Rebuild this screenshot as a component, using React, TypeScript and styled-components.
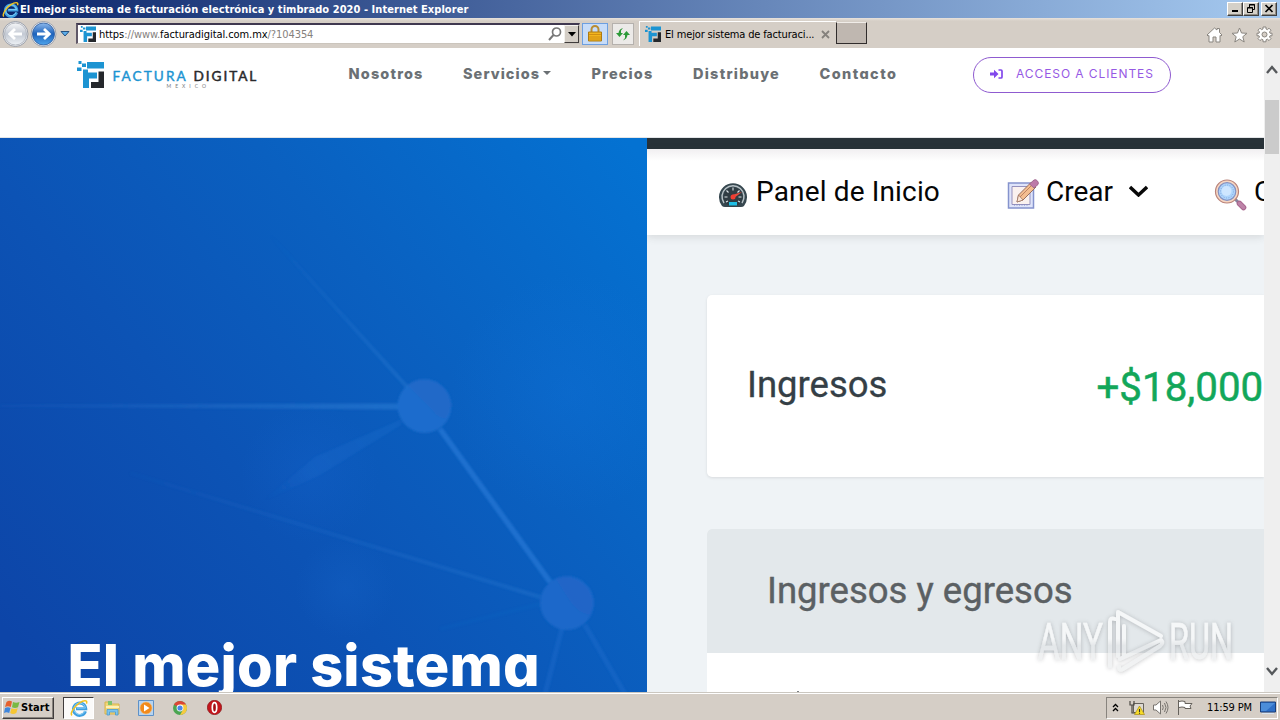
import React from 'react';
import styled, { createGlobalStyle, css } from 'styled-components';

const Global = createGlobalStyle`
  * { box-sizing: border-box; }
  body { margin: 0; overflow: hidden; }
  svg { display: block; flex: none; }
`;

const ui = css`font-family: 'DejaVu Sans Condensed', 'DejaVu Sans', Tahoma, sans-serif; font-size: 11px;`;

const Screen = styled.div`
  width: 1280px; height: 720px; display: flex; flex-direction: column; overflow: hidden; background: #fff;
`;

/* Window chrome */
const TitleBar = styled.header`
  ${ui} height: 18px; flex: none; display: flex; align-items: center; padding: 0 3px 0 2px;
  background: linear-gradient(90deg, #0a246a, #a6caf0);
  color: #fff; font-weight: bold;
`;
const TitleText = styled.span`
  flex: 1; margin-left: 1px; line-height: 17px; letter-spacing: 0.05px; white-space: nowrap;
`;
const WinButton = styled.span<{ $gap?: boolean }>`
  width: 16px; height: 14px; margin-left: ${p => (p.$gap ? 2 : 0)}px; margin-top: -1px;
  display: flex; align-items: center; justify-content: center; background: #d4d0c8;
  border: 1px solid; border-color: #fff #404040 #404040 #fff; box-shadow: inset -1px -1px #908c84;
`;
const Toolbar = styled.div`
  height: 30px; flex: none; display: flex; align-items: center; padding: 1px 7px 0 2px;
  background: linear-gradient(#e8e2dc 0, #d5cec6 3px, #d5cec6);
`;
const Address = styled.div`
  ${ui} width: 504px; height: 21px; margin-left: 6px; display: flex; align-items: center; padding-left: 2px;
  background: #fff; border: 1px solid #cbc5bd; border-top: 2px solid #403850; border-left: 2px solid #605868;
  color: #000;
`;
const Url = styled.span`flex: 1; margin-left: 3px; color: #85817d; letter-spacing: -0.07px; white-space: nowrap;`;
const UrlStrong = styled.span`color: #000;`;
const DropButton = styled.span`
  width: 15px; height: 18px; margin-left: 2px; display: flex; align-items: center; justify-content: center;
  background: #d4cec6; border: 1px solid; border-color: #f4f2ee #403c3c #403c3c #f4f2ee;
`;
const ToolButton = styled.span<{ $active?: boolean }>`
  width: ${p => (p.$active ? 26 : 22)}px; height: 22px; margin-left: ${p => (p.$active ? 2 : 4)}px;
  display: flex; align-items: center; justify-content: center;
  background: ${p => (p.$active ? '#c7dcf8' : '#eceae8')};
  border: 1px solid ${p => (p.$active ? '#6d9fe0' : '#b5b1ad')};
`;
const Tab = styled.div`
  ${ui} width: 197px; height: 25px; margin: 0 0 0 5px; display: flex; align-items: center; padding: 0 6px 0 5px;
  border-top: 1px solid #fff; border-left: 1px solid #fff; background: #d5cec6; color: #000;
`;
const TabText = styled.span`flex: 1; margin-left: 4px; letter-spacing: -0.15px; white-space: nowrap;`;
const NewTab = styled.span`
  width: 31px; height: 22px; margin-top: -1px; background: #bfb7b0;
  border: 1px solid #302c2c; border-top-color: #f0ece8;
`;
const Tools = styled.div`flex: 1; display: flex; justify-content: flex-end; align-items: center; gap: 8px; padding-top: 2px;`;

/* Web page */
const Viewport = styled.div`height: 644px; flex: none; display: flex;`;
const Page = styled.main`width: 1264px; height: 644px; display: flex; flex-direction: column; overflow: hidden;`;
const SiteHeader = styled.div`
  height: 90px; flex: none; display: flex; align-items: flex-start; padding: 9px 93px 0 77px;
  background: #fff; border-bottom: 1px solid #e3e5e7;
`;
const Brand = styled.div`width: 271.5px; display: flex; align-items: flex-start; padding-top: 4px;`;
const BrandText = styled.div`
  margin: 7px 0 0 8.5px; width: 147px; display: flex; flex-direction: column;
  font: 13.6px/16px Lato, sans-serif; color: #2a2a2c; white-space: nowrap;
`;
const BrandName = styled.div`display: flex; gap: 5px;`;
const BrandFirst = styled.span`width: 76px; color: #1c94d2; letter-spacing: 2.1px; -webkit-text-stroke: 0.4px #1c94d2;`;
const BrandSecond = styled.span`letter-spacing: 1.95px; -webkit-text-stroke: 0.5px #2a2a2c;`;
const BrandCountry = styled.span`margin: -1px 0 0 54px; font-size: 5px; line-height: 7px; letter-spacing: 4px; color: #77797c;`;
const Nav = styled.nav`
  width: 624.5px; display: grid; grid-template-columns: 114.5px 128.5px 101.5px 126.5px auto;
  font: 800 14.5px/34px Inter, sans-serif; font-feature-settings: 'cv11'; color: #6b7074;
`;
const NavItem = styled.span<{ $ls: number }>`
  display: flex; align-items: center; letter-spacing: ${p => p.$ls}px; white-space: nowrap;
`;
const Caret = styled.i`border: 4.5px solid transparent; border-top-color: #6b7074; border-bottom: 0; margin: -2px 0 0 3px;`;
const LoginButton = styled.div`
  width: 198px; height: 36px; display: flex; align-items: center; padding: 0 0 3px 16px;
  border: 1px solid #8f5bd0; border-radius: 18px; color: #9659e4;
  font: 12px/30px Inter, sans-serif; letter-spacing: 0.92px; white-space: nowrap;
`;
const LoginLabel = styled.span`margin-left: 13px;`;

const Body = styled.div`flex: 1; display: flex; min-height: 0;`;
const Hero = styled.section`
  width: 647px; display: grid; overflow: hidden;
  background:
    radial-gradient(circle at 570px 255px, rgba(18,115,220,.28), transparent 120px),
    radial-gradient(circle at 345px 450px, rgba(25,105,205,.25), transparent 50px),
    radial-gradient(circle at 310px 335px, rgba(25,105,215,.2), transparent 70px),
    linear-gradient(51deg, #0d45a8 5%, #0c53b5 38%, #0a60c0 64%, #0472d2 98%);
  & > * { grid-area: 1 / 1; }
`;
const HeroTitle = styled.h1`
  margin: 0; align-self: end; padding-left: 67.5px; height: 62px; color: #fff; white-space: nowrap;
  font: 800 57.5px/70px Inter, sans-serif; font-feature-settings: 'cv11'; letter-spacing: 0.25px;
`;
const Panel = styled.section`flex: 1; min-width: 0; display: flex; flex-direction: column; background: #eff3f6; overflow: hidden;`;
const PanelTop = styled.div`height: 11px; flex: none; background: #283238;`;
const PanelMenu = styled.div`
  height: 86px; flex: none; display: flex; align-items: center; padding-left: 71px;
  background: linear-gradient(#f1eff1, #fff 12px); box-shadow: 0 2px 8px rgba(60,60,60,.14);
  font: 28px/84px Roboto, sans-serif; color: #050505; white-space: nowrap;
`;
const MenuEntry = styled.div<{ $w?: number; $gap: number; $ls?: number }>`
  width: ${p => (p.$w ? p.$w + 'px' : 'auto')}; flex: none; display: flex; align-items: center;
  gap: ${p => p.$gap}px; letter-spacing: ${p => p.$ls || 0}px;
`;
const MenuIcon = styled.span`padding-top: 4px;`;
const MenuLabel = styled.span`margin-right: 9px;`;
const MenuArrow = styled.span`padding-bottom: 3px;`;
const IncomeCard = styled.div`
  height: 182px; flex: none; margin: 60px 0 0 60px; display: flex; padding: 0 0 0 40px;
  background: #fff; border-radius: 5px 0 0 5px; box-shadow: 0 1px 3px rgba(0,0,0,.1);
  font: 36.5px/180px Roboto, sans-serif; color: #353f46; white-space: nowrap; -webkit-text-stroke: 0.3px;
`;
const IncomeLabel = styled.span`width: 349.5px;`;
const Amount = styled.span`color: #12a75a; font-size: 40.3px; line-height: 186px; -webkit-text-stroke: 0.5px #12a75a;`;
const ChartCard = styled.div`
  margin: 52px 0 0 60px; flex: 1; display: flex; flex-direction: column; justify-content: space-between;
  background: #fff; border-radius: 5px 0 0 0; overflow: hidden;
`;
const ChartTitle = styled.div`
  height: 124px; padding-left: 60px; background: #e3e8eb; color: #5b6063;
  font: 36.5px/123px Roboto, sans-serif; white-space: nowrap; -webkit-text-stroke: 0.4px #5b6063;
`;
const ChartTick = styled.i`width: 2px; height: 1px; margin-left: 90px; background: #7c8083;`;
const ScrollBar = styled.aside`
  width: 16px; height: 644px; display: flex; flex-direction: column; align-items: center; background: #efefef;
`;
const Thumb = styled.div`width: 14px; height: 54px; margin: 22px 0 auto; background: #cbcbcb;`;
const ArrowBox = styled.div<{ $top: number; $bottom: number }>`margin: ${p => p.$top}px 0 ${p => p.$bottom}px;`;

/* Taskbar */
const TaskBar = styled.footer`
  ${ui} height: 28px; flex: none; display: flex; align-items: center; padding: 2px 2px 0;
  background: #d5cec6; border-top: 1px solid #cbc7c0; box-shadow: inset 0 1px #fff; color: #000;
`;
const StartButton = styled.div`
  width: 52px; height: 22px; display: flex; align-items: center; padding-left: 1px; font-weight: bold;
  border: 1px solid; border-color: #fff #403c3c #403c3c #fff; box-shadow: inset -1px -1px #88847e;
`;
const StartText = styled.span`margin-left: 1px; letter-spacing: 0.1px;`;
const TaskItem = styled.span<{ $active?: boolean }>`
  width: ${p => (p.$active ? 31 : 34)}px; height: 22px; display: flex; align-items: center; justify-content: center;
  ${p => p.$active && css`margin: 0 1px 0 9px; background: #fbfaf9; border: 1px solid; border-color: #403c3c #fff #fff #403c3c;`}
`;
const Tray = styled.div`
  width: 172px; height: 22px; margin-left: auto; display: flex; align-items: center; padding: 0 0 0 5px;
  border: 1px solid; border-color: #88847e #fff #fff #88847e;
`;
const TraySlot = styled.span<{ $w: number }>`width: ${p => p.$w}px; flex: none; display: flex; align-items: center;`;
const Clock = styled.span`width: 53px; letter-spacing: -0.15px; white-space: nowrap;`;

const Watermark = styled.div`position: absolute; left: 1030px; top: 602px;`;

const BrandMark = ({ size }: { size: number }) => (
  <svg width={size} height={size} viewBox="0 0 27 27">
    <g fill="#1c94d2">
      <path d="M10 1h17v6.500H10zM6 8.500h5v3h9v6h-8V27H6z" />
      <path d="M1.500 0h3v3h-3zM5 2.500h4V6H5zM0 6.500h4.500v3.500H0z" />
    </g>
    <path fill="#25282c" d="M21.500 10.500H27V27H14v-6h7.500z" />
  </svg>
);

const IE = ({ size }: { size: number }) => (
  <svg width={size} height={size} viewBox="0 0 18 18" fill="none">
    <path d="M15.500 12.200a6.200 6.200 0 1 1 .3-2.500H6" stroke="#3f9fdf" strokeWidth="2.900" />
    <path d="M15 12a5.800 5.800 0 1 1 .4-2.900H7" stroke="#8bd3f8" strokeWidth=".9" />
    <path d="M2 16.400C-.5 14.500 4.500 7 9.500 3.800 13.500 1.200 18 .6 16.400 4.600" stroke="#f2c21f" strokeWidth="1.500" />
  </svg>
);

const RoundArrow = ({ forward }: { forward?: boolean }) => (
  <svg width="28" height="26" viewBox="0 0 28 26">
    <defs>
      <linearGradient id={forward ? 'fw' : 'bk'} x2="0" y2="1">
        <stop offset="0" stopColor={forward ? '#8db9ec' : '#f6f7f9'} />
        <stop offset=".5" stopColor={forward ? '#1d62bb' : '#c3c9d3'} />
        <stop offset="1" stopColor={forward ? '#4fa5ec' : '#eef2f6'} />
      </linearGradient>
    </defs>
    <circle cx="13.500" cy="13" r="12.500" fill="#e9ebef" stroke="#9ba0aa" />
    <circle cx="13.500" cy="13" r="11" fill={`url(#${forward ? 'fw' : 'bk'})`} stroke={forward ? '#2c5a9d' : '#a9aeb8'} strokeWidth=".8" />
    <path d={forward ? 'M7 13h12M14 8l5.300 5-5.300 5' : 'M20 13H8M13 8l-5.300 5 5.300 5'} fill="none" stroke="#fff" strokeWidth="2.800" />
  </svg>
);

const Network = () => (
  <svg width="647" height="554" viewBox="0 0 647 554" fill="none">
    <defs>
      <filter id="haze" x="-5%" y="-5%" width="110%" height="110%"><feGaussianBlur stdDeviation="0.8" /></filter>
      <linearGradient id="n1" gradientUnits="userSpaceOnUse" x1="0" y1="268" x2="400" y2="268">
        <stop offset="0" stopColor="#3d8de0" stopOpacity=".06" /><stop offset="1" stopColor="#3d8de0" stopOpacity=".38" />
      </linearGradient>
      <linearGradient id="n2" gradientUnits="userSpaceOnUse" x1="270" y1="95" x2="408" y2="250">
        <stop offset="0" stopColor="#3d8de0" stopOpacity="0" /><stop offset="1" stopColor="#3d8de0" stopOpacity=".26" />
      </linearGradient>
      <linearGradient id="n3" gradientUnits="userSpaceOnUse" x1="130" y1="335" x2="540" y2="458">
        <stop offset="0" stopColor="#3d8de0" stopOpacity=".03" /><stop offset="1" stopColor="#3d8de0" stopOpacity=".22" />
      </linearGradient>
      <linearGradient id="n4" gradientUnits="userSpaceOnUse" x1="265" y1="365" x2="400" y2="284">
        <stop offset="0" stopColor="#3584df" stopOpacity="0" /><stop offset=".4" stopColor="#3584df" stopOpacity=".14" /><stop offset="1" stopColor="#3584df" stopOpacity=".16" />
      </linearGradient>
    </defs>
    <g filter="url(#haze)">
      <path d="M0 266.500l398-1v6L0 269z" fill="url(#n1)" />
      <path d="M262 88L408 250" stroke="url(#n2)" strokeWidth="4" />
      <path d="M130 335Q335 397 540 459" stroke="url(#n3)" strokeWidth="4" />
      <path d="M400 282l-85 37-55 46 60-28 81-50z" fill="url(#n4)" />
      <path d="M440 291l110 153" stroke="#3383df" strokeWidth="5.500" opacity=".5" />
      <path d="M562 490l-17 66M585 487l40 69" stroke="#3584df" strokeWidth="5" opacity=".2" />
      <path d="M540 466l-100 25" stroke="#3584df" strokeWidth="4" opacity=".06" />
      <circle cx="424.500" cy="268" r="27" fill="#1f6fce" opacity=".9" />
      <path d="M408 247a27 27 0 0 1 43 21q-1 6-5 12-8 0-12-6z" fill="#2565c5" opacity=".65" />
      <circle cx="567" cy="465" r="27" fill="#1d69cb" opacity=".9" />
      <path d="M556 441a27 27 0 0 1 34 36q-12-2-20-14z" fill="#2863c5" opacity=".6" />
    </g>
  </svg>
);

const Gauge = () => (
  <svg width="30" height="25" viewBox="0 0 30 25">
    <path d="M4 24A14 14 0 1 1 26 24Q25 25 23 25H7Q5 25 4 24z" fill="#36474f" />
    <path d="M6 21A11 11 0 1 1 24 21" fill="none" stroke="#b8c2c7" strokeWidth="1.500" />
    <circle cx="15" cy="15" r="9.500" fill="#303c43" />
    <path d="M6.500 15h3M8.500 8.500l2 2M15 5.500v3M21.500 8.500l-2 2M23.500 15h-3M8 20l2-1M22 20l-2-1" stroke="#dce4e8" strokeWidth="1.100" />
    <path d="M14 13l10-3-8 6z" fill="#e9493c" /><circle cx="15" cy="15" r="2.500" fill="#f03e32" />
    <path d="M11 20h8v3.500h-8z" fill="#20bfe5" />
  </svg>
);

const Memo = () => (
  <svg width="32" height="31" viewBox="0 0 32 31">
    <path d="M1.500 4h25v25h-25z" fill="#dfe4fa" stroke="#8593cd" strokeWidth="1.500" />
    <path d="M5 7.500h18v18H5z" fill="#faf1ef" stroke="#9591bd" />
    <path d="M7 26h15" stroke="#7e88c0" strokeDasharray="1 1.500" />
    <path d="M10 23l1.500-7L24 3.500l5 4.500-13 13z" fill="#f4be91" stroke="#98705f" />
    <path d="M10 23l1.500-7 4.500 5z" fill="#fbe6d7" stroke="#98705f" strokeWidth=".7" /><path d="M13 18L25 6" stroke="#bd8263" />
    <path d="M22.500 5L27 1q2-1 3.500 1t.500 3.500L27 9z" fill="#bd7aa8" stroke="#a2688f" />
  </svg>
);

const Lens = () => (
  <svg width="33" height="33" viewBox="0 0 33 33">
    <path d="M21 21l4 4" stroke="#85829c" strokeWidth="3" />
    <path d="M25.500 25.500l4 4" stroke="#a8668e" strokeWidth="5.500" strokeLinecap="round" />
    <path d="M25.500 25.500l4 4" stroke="#bd83a8" strokeWidth="3.500" strokeLinecap="round" />
    <circle cx="13" cy="13.500" r="11.500" fill="#f6d6c2" stroke="#b9837a" strokeWidth="1.200" />
    <circle cx="13" cy="13.500" r="8.800" fill="#add4fb" stroke="#8391c2" strokeWidth="1.200" />
    <circle cx="12.500" cy="13" r="5" fill="#cee6ff" /><circle cx="13" cy="13.500" r="6.500" fill="none" stroke="#789bd5" strokeDasharray="1 1.500" strokeWidth=".8" />
  </svg>
);

const Chevron = ({ w, h, up, color, stroke }: { w: number; h: number; up?: boolean; color: string; stroke: number }) => (
  <svg width={w} height={h} viewBox={`0 0 ${w} ${h}`}>
    <path d={up ? `M1 ${h - 2}L${w / 2} 2l${w / 2 - 1} ${h - 4}` : `M1 2l${w / 2 - 1} ${h - 4}L${w - 1} 2`} fill="none" stroke={color} strokeWidth={stroke} />
  </svg>
);

const App = () => (
  <Screen>
    <Global />
    <TitleBar>
      <IE size={17} />
      <TitleText>El mejor sistema de facturación electrónica y timbrado 2020 - Internet Explorer</TitleText>
      <WinButton><svg width="10" height="9"><path d="M2 7h6" stroke="#000" strokeWidth="2" /></svg></WinButton>
      <WinButton>
        <svg width="10" height="9"><path d="M3.500 3V.5h5v5H7M3 1h6M1.500 4v4.500h5V3.500h-5M1 4h6" fill="none" stroke="#000" /></svg>
      </WinButton>
      <WinButton $gap><svg width="10" height="9"><path d="M1.500 1l7 7M8.500 1l-7 7" stroke="#000" strokeWidth="1.700" /></svg></WinButton>
    </TitleBar>
    <Toolbar>
      <RoundArrow />
      <RoundArrow forward />
      <svg width="12" height="8" viewBox="0 0 12 8"><path d="M3 1.500h8L7 6z" fill="#5badea" stroke="#24507f" /></svg>
      <Address>
        <BrandMark size={16} />
        <Url><UrlStrong>https</UrlStrong>://www.<UrlStrong>facturadigital.com.mx</UrlStrong>/?104354</Url>
        <svg width="14" height="14" viewBox="0 0 14 14"><circle cx="8.500" cy="5" r="4" fill="none" stroke="#777" strokeWidth="1.700" /><path d="M5.500 8L1 13" stroke="#777" strokeWidth="2" /></svg>
        <DropButton><svg width="8" height="5"><path d="M0 0h8L4 4.500z" /></svg></DropButton>
      </Address>
      <ToolButton $active>
        <svg width="14" height="17" viewBox="0 0 14 17">
          <path d="M3.500 8V4.500a3.500 3.500 0 0 1 7 0V8" fill="none" stroke="#b98d32" strokeWidth="2" />
          <path d="M.5 7h13v9H.5z" fill="#f2b51e" stroke="#ad7a12" /><path d="M1 9.500h12M1 12h12M1 14h12" stroke="#d08f12" />
        </svg>
      </ToolButton>
      <ToolButton>
        <svg width="16" height="14" viewBox="0 0 16 14" fill="#2c9a38">
          <path d="M1 6h2.500Q4 2 8 1L6 3.500V6h2L4.500 10z" /><path d="M15 8h-2.500Q12 12 8 13.500l2-2.500V8H8l3.500-4z" />
        </svg>
      </ToolButton>
      <Tab>
        <BrandMark size={16} />
        <TabText>El mejor sistema de facturaci...</TabText>
        <svg width="9" height="9"><path d="M1 1l7 7M8 1L1 8" stroke="#85817c" strokeWidth="1.800" /></svg>
      </Tab>
      <NewTab />
      <Tools>
        <svg width="17" height="16" viewBox="0 0 17 16"><path d="M1 8l7.500-7L11 3V1.500h2.500V5.500L16 8l-1 1-1-.5V15h-4v-5H7v5H3V8.500L2 9z" fill="#fff" stroke="#8a8680" /></svg>
        <svg width="17" height="16" viewBox="0 0 17 16"><path d="M8.500 1l2 5 5.500.300-4.200 3.400L13.200 15 8.500 12l-4.700 3 1.400-5.300L1 6.300 6.500 6z" fill="#fff" stroke="#8a8680" /></svg>
        <svg width="17" height="17" viewBox="0 0 17 17">
          <path d="M7 1h3v2l1.500.600 1.500-1.400 2 2L13.500 6l.500 1.200h2v2.600h-2L13.500 11l1.500 1.600-2 2-1.500-1.400-1.500.600v2H7v-2l-1.500-.600L4 14.600l-2-2L3.500 11 3 9.800H1V7.200h2L3.500 6 2 4.200l2-2 1.500 1.400L7 3z" fill="#fff" stroke="#8a8680" />
          <circle cx="8.500" cy="8.500" r="2.500" fill="#d5cec6" stroke="#8a8680" />
        </svg>
      </Tools>
    </Toolbar>
    <Viewport>
      <Page>
        <SiteHeader>
          <Brand>
            <BrandMark size={27} />
            <BrandText>
              <BrandName><BrandFirst>FACTURA</BrandFirst><BrandSecond>DIGITAL</BrandSecond></BrandName>
              <BrandCountry>MEXICO</BrandCountry>
            </BrandText>
          </Brand>
          <Nav>
            <NavItem $ls={1.15}>Nosotros</NavItem>
            <NavItem $ls={1.05}>Servicios<Caret /></NavItem>
            <NavItem $ls={1.15}>Precios</NavItem>
            <NavItem $ls={1.25}>Distribuye</NavItem>
            <NavItem $ls={1.4}>Contacto</NavItem>
          </Nav>
          <LoginButton>
            <svg width="13" height="10" viewBox="0 0 13 10"><path d="M0 3.500h4V.7L8.500 5 4 9.300V6.500H0z" fill="#8248ec" /><path d="M8.500 1H11q1 0 1 1v6q0 1-1 1H8.500" fill="none" stroke="#8248ec" strokeWidth="1.700" /></svg>
            <LoginLabel>ACCESO A CLIENTES</LoginLabel>
          </LoginButton>
        </SiteHeader>
        <Body>
          <Hero>
            <Network />
            <HeroTitle>El mejor sistema</HeroTitle>
          </Hero>
          <Panel>
            <PanelTop />
            <PanelMenu>
              <MenuEntry $w={289} $gap={8} $ls={0.15}><MenuIcon><Gauge /></MenuIcon><MenuLabel>Panel de Inicio</MenuLabel></MenuEntry>
              <MenuEntry $w={207} $gap={7}><MenuIcon><Memo /></MenuIcon><MenuLabel>Crear</MenuLabel><MenuArrow><Chevron w={19} h={12} color="#080808" stroke={3.4} /></MenuArrow></MenuEntry>
              <MenuEntry $gap={7}><MenuIcon><Lens /></MenuIcon><MenuLabel>C</MenuLabel></MenuEntry>
            </PanelMenu>
            <IncomeCard><IncomeLabel>Ingresos</IncomeLabel><Amount>+$18,000</Amount></IncomeCard>
            <ChartCard><ChartTitle>Ingresos y egresos</ChartTitle><ChartTick /></ChartCard>
          </Panel>
        </Body>
      </Page>
      <ScrollBar>
        <ArrowBox $top={17} $bottom={3}><Chevron up w={12} h={10} color="#55585b" stroke={2.4} /></ArrowBox>
        <Thumb />
        <ArrowBox $top={0} $bottom={16}><Chevron w={12} h={10} color="#55585b" stroke={2.4} /></ArrowBox>
      </ScrollBar>
    </Viewport>
    <TaskBar>
      <StartButton>
        <svg width="16" height="15" viewBox="0 0 16 15">
          <path d="M2.500 2Q5-.2 8 1.500L6.800 7Q4 5.500 1 7z" fill="#e5602e" /><path d="M9 2q3 1.500 6.500 0L14 7.200Q11 8.700 8 7.200z" fill="#79b943" />
          <path d="M1 8q3-1.500 5.500 0L5.200 13Q2.500 11.500 0 13z" fill="#3f86dc" /><path d="M7.500 8.200Q10.500 9.800 13.700 8.200L12.300 13Q9 14.800 6.200 13z" fill="#f6c632" />
        </svg>
        <StartText>Start</StartText>
      </StartButton>
      <TaskItem $active><IE size={18} /></TaskItem>
      <TaskItem>
        <svg width="17" height="16" viewBox="0 0 17 16">
          <path d="M1 2h5l1 2h8v10H1z" fill="#f0d678" stroke="#d6b24d" /><path d="M4 1h4v4H4z" fill="#7cc36d" /><path d="M2 6h13v2H2z" fill="#fdf1b7" />
          <path d="M3 15V9.500h11V15h-2.500v-3h-6v3z" fill="#7cc4ee" stroke="#499bcf" strokeWidth=".8" />
        </svg>
      </TaskItem>
      <TaskItem>
        <svg width="16" height="16" viewBox="0 0 16 16"><path d="M.5.5h15v15H.5z" fill="#b7d4f0" stroke="#5d91c8" /><circle cx="8" cy="8" r="6" fill="#f18a1c" stroke="#fbc070" strokeWidth=".6" /><path d="M6 4.500L11.500 8 6 11.500z" fill="#fff" /></svg>
      </TaskItem>
      <TaskItem>
        <svg width="14" height="14" viewBox="0 0 14 14">
          <circle cx="7" cy="7" r="7" fill="#4ba552" /><path d="M7 7L.94 3.500A7 7 0 0 1 13.060 3.500z" fill="#dc4537" />
          <path d="M7 7V3.500h6.060A7 7 0 0 1 7 14l3-5.300z" fill="#f7ca3e" /><circle cx="7" cy="7" r="3.400" fill="#fff" /><circle cx="7" cy="7" r="2.600" fill="#4a87e8" />
        </svg>
      </TaskItem>
      <TaskItem>
        <svg width="15" height="15" viewBox="0 0 15 15"><circle cx="7.500" cy="7.500" r="7.200" fill="#c4161c" stroke="#7c0d11" strokeWidth=".6" /><ellipse cx="7.500" cy="7.500" rx="2.200" ry="4.800" fill="#a30d12" stroke="#fff" strokeWidth="1.700" /></svg>
      </TaskItem>
      <Tray>
        <TraySlot $w={17}><svg width="7" height="9"><path d="M1 4l2.500-2.500L6 4M1 8l2.500-2.500L6 8" fill="none" stroke="#000" strokeWidth="1.300" /></svg></TraySlot>
        <TraySlot $w={24}>
          <svg width="16" height="15" viewBox="0 0 16 15"><path d="M4.500 3.500h10v9h-10z" fill="#ddd9d2" stroke="#66625c" /><path d="M1 1v4h4V1M3 5v8h3" fill="none" stroke="#4c4944" strokeWidth="1.200" /><path d="M10.500 6l5 8.500h-10z" fill="#f7dc28" stroke="#a98c14" strokeWidth=".7" /><path d="M10.500 9v3M10.500 12.700v1" stroke="#333" strokeWidth="1.100" /></svg>
        </TraySlot>
        <TraySlot $w={24}>
          <svg width="16" height="15" viewBox="0 0 16 15" fill="none" stroke="#77736e"><path d="M.5 5H3l4.500-4v13L3 10H.5z" fill="#fff" /><path d="M9.500 5q1.500 2.500 0 5M11.500 3q3 4.500 0 9M13 1.500q4 6 0 12" /></svg>
        </TraySlot>
        <TraySlot $w={30}>
          <svg width="17" height="15" viewBox="0 0 17 15"><path d="M1.500 0v15M2 1.500q3-1 6 0v2h7l-2 2.500 1 2.500H8v-1q-3-1-6 0" fill="#fff" stroke="#66625c" /></svg>
        </TraySlot>
        <Clock>11:59 PM</Clock>
        <svg width="16" height="14" viewBox="0 0 16 14"><path d="M.5 1h15v10H.5z" fill="#2e6fc6" stroke="#183f7b" /><path d="M1 2h14l-9 8H1z" fill="#65a5ea" opacity=".55" /><path d="M2 12.500h12" stroke="#d8e4f0" /></svg>
      </Tray>
    </TaskBar>
    <Watermark>
      <svg width="212" height="78" viewBox="0 0 212 78" fontFamily="Roboto, sans-serif" fontWeight="400" fontSize="50">
        <defs>
          <filter id="soft" x="-10%" y="-20%" width="120%" height="140%"><feDropShadow dx="0" dy="0.5" stdDeviation="2.200" floodColor="#606468" floodOpacity=".6" /></filter>
          <linearGradient id="sheen" gradientUnits="userSpaceOnUse" x1="0" y1="10" x2="0" y2="70">
            <stop offset="0" stopColor="#fff" /><stop offset=".45" stopColor="#fff" /><stop offset=".56" stopColor="#e6e8ea" /><stop offset="1" stopColor="#eceeef" />
          </linearGradient>
        </defs>
        <g opacity=".65" filter="url(#soft)" fill="url(#sheen)" stroke="url(#sheen)" strokeWidth=".5">
          <text x="8" y="57" textLength="65" lengthAdjust="spacingAndGlyphs">ANY</text>
          <text x="139" y="57" textLength="64" lengthAdjust="spacingAndGlyphs">RUN</text>
          <g fill="none" strokeWidth="4" strokeLinejoin="round" strokeLinecap="round">
            <path d="M80 64V20q0-5 5-3M88 54V10l43 24M90 57l41-19q3 3-1 6L93 67q-4 2-4-2M94 24v30" />
          </g>
        </g>
      </svg>
    </Watermark>
  </Screen>
);

export default App;
